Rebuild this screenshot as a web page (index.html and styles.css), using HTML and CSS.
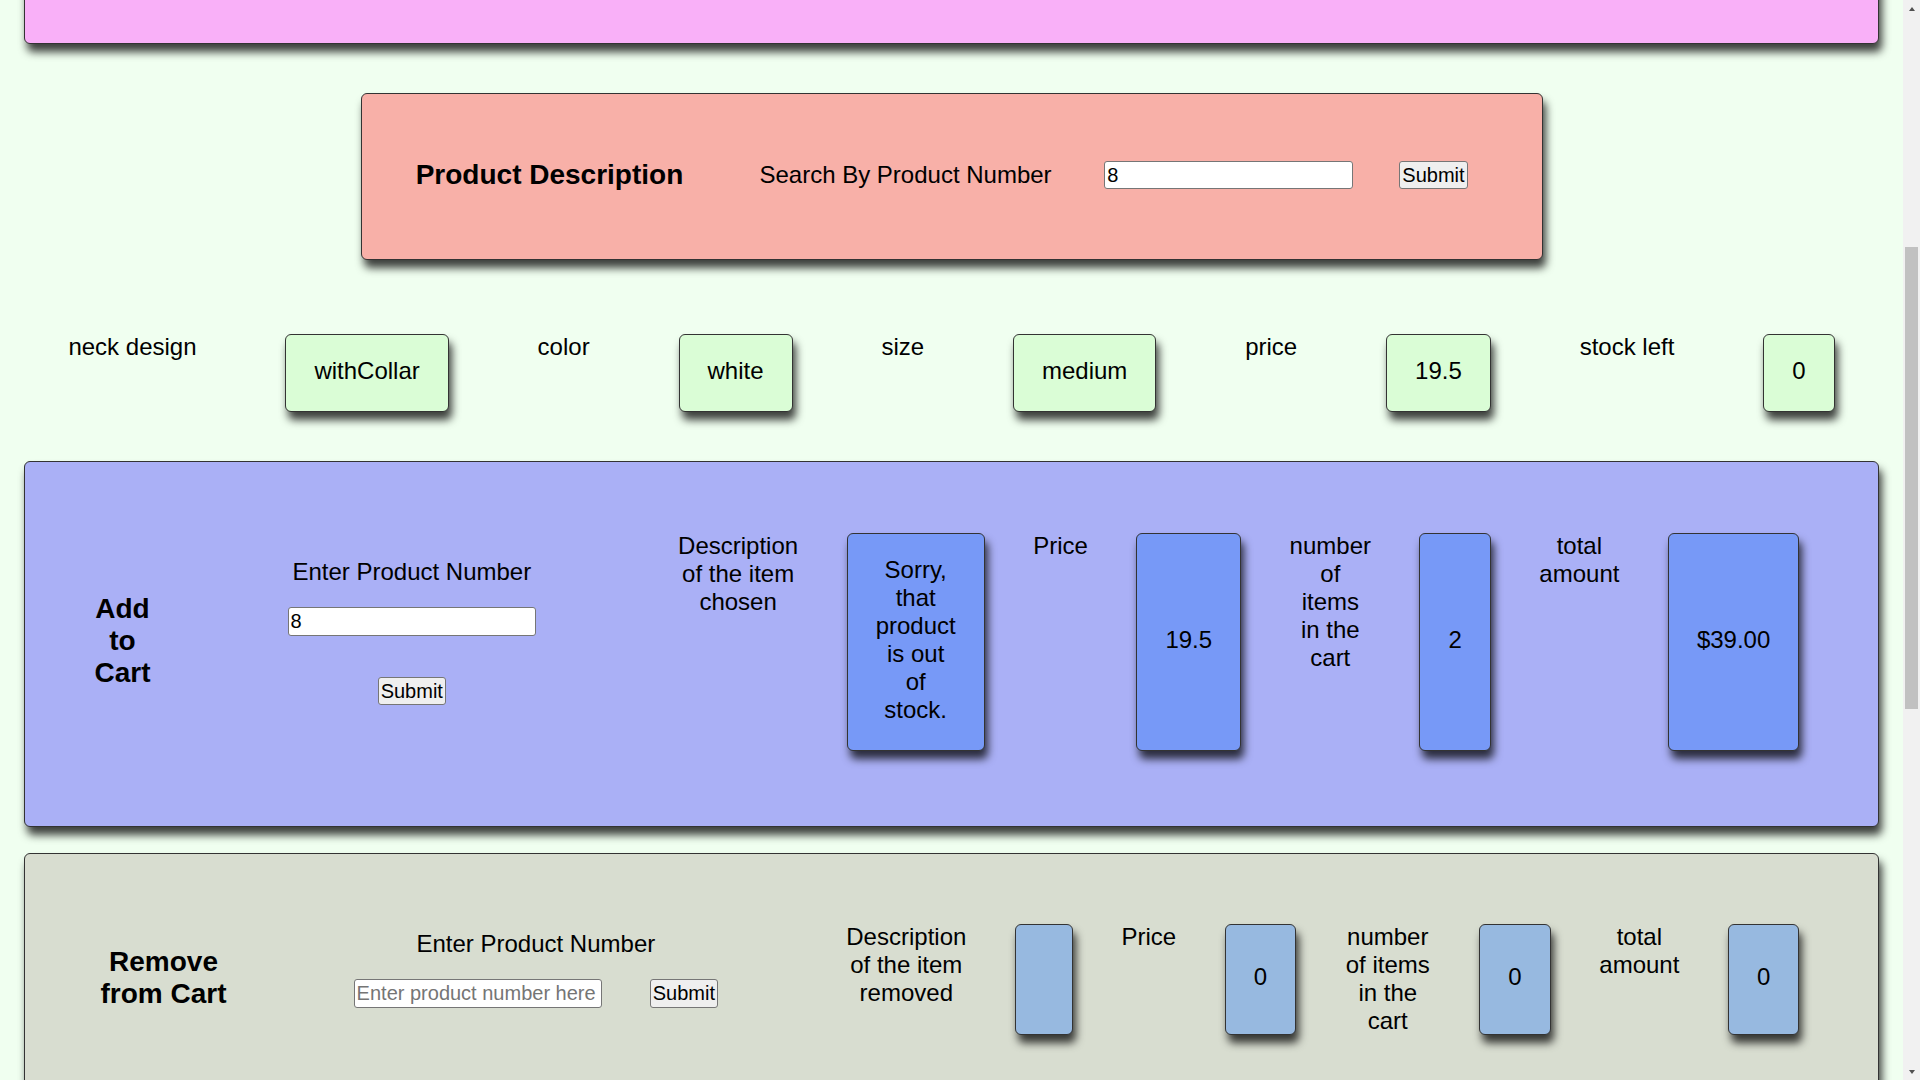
FILE: index.html
```html
<!DOCTYPE html>
<html lang="en">
<head>
<meta charset="utf-8">
<title>Shirt Store</title>
<link rel="stylesheet" href="styles.css">
</head>
<body>
<div class="page">
  <header class="banner"></header>

  <section class="search-panel">
    <h2 class="search-title">Product Description</h2>
    <label class="search-label" for="search-number">Search By Product Number</label>
    <input id="search-number" class="field" type="text" value="8">
    <button class="btn search-btn" type="button">Submit</button>
  </section>

  <section class="features">
    <span class="feat-label">neck design</span>
    <div class="feat-box">withCollar</div>
    <span class="feat-label">color</span>
    <div class="feat-box">white</div>
    <span class="feat-label">size</span>
    <div class="feat-box">medium</div>
    <span class="feat-label">price</span>
    <div class="feat-box">19.5</div>
    <span class="feat-label">stock left</span>
    <div class="feat-box">0</div>
  </section>

  <section class="panel add-panel">
    <h2 class="panel-title add-title"><span class="title-text">Add to Cart</span></h2>
    <div class="entry add-entry">
      <label class="entry-label" for="add-number">Enter Product Number</label>
      <input id="add-number" class="field" type="text" value="8">
      <button class="btn add-btn" type="button">Submit</button>
    </div>
    <div class="fields add-fields">
      <span class="f-label">Description of the item chosen</span>
      <div class="f-box add-box">Sorry, that product is out of stock.</div>
      <span class="f-label">Price</span>
      <div class="f-box add-box">19.5</div>
      <span class="f-label">number of items in the cart</span>
      <div class="f-box add-box">2</div>
      <span class="f-label">total amount</span>
      <div class="f-box add-box">$39.00</div>
    </div>
  </section>

  <section class="panel remove-panel">
    <h2 class="panel-title remove-title"><span class="title-text">Remove from Cart</span></h2>
    <div class="entry remove-entry">
      <label class="entry-label" for="remove-number">Enter Product Number</label>
      <div class="entry-row">
        <input id="remove-number" class="field" type="text" placeholder="Enter product number here">
        <button class="btn" type="button">Submit</button>
      </div>
    </div>
    <div class="fields remove-fields">
      <span class="f-label">Description of the item removed</span>
      <div class="f-box remove-box"></div>
      <span class="f-label">Price</span>
      <div class="f-box remove-box">0</div>
      <span class="f-label wide">number of items in the cart</span>
      <div class="f-box remove-box">0</div>
      <span class="f-label">total amount</span>
      <div class="f-box remove-box">0</div>
    </div>
  </section>
</div>

<div class="scrollbar" aria-hidden="true">
  <span class="sb-arrow sb-up"></span>
  <span class="sb-track"><span class="sb-thumb"></span></span>
  <span class="sb-arrow sb-down"></span>
</div>
<script src="script.js"></script>
</body>
</html>
```

FILE: styles.css
```css
* {
  box-sizing: border-box;
}

html {
  background: #f0fff0;
  scroll-behavior: auto;
  scrollbar-width: none;
}

body {
  margin: 0;
  background: #f0fff0;
  color: #000;
  font-family: "Liberation Sans", Arial, sans-serif;
  font-size: 24px;
  line-height: 28px;
}

.page {
  margin-right: 17px;
  padding: 24px 24px 793px;
}

/* window scrollbar (drawn, the real one is hidden) */
.scrollbar {
  position: fixed;
  top: 0;
  right: 0;
  display: flex;
  flex-direction: column;
  width: 17px;
  height: 100vh;
  background: #f1f1f1;
}

.sb-arrow {
  display: flex;
  align-items: center;
  justify-content: center;
  flex: 0 0 17px;
}

.sb-arrow::before {
  content: "";
  width: 0;
  height: 0;
  border-left: 3.5px solid transparent;
  border-right: 3.5px solid transparent;
}

.sb-up::before {
  border-bottom: 4px solid #505050;
}

.sb-down::before {
  border-top: 4px solid #505050;
}

.sb-track {
  display: block;
  flex: 1 1 auto;
  padding: 229.6px 2px 0;
}

.sb-thumb {
  display: block;
  height: 462.8px;
  background: #c1c1c1;
}

.banner {
  height: 556px;
  background: #f9b0f8;
  border: 1px solid #333;
  border-radius: 6px;
  box-shadow: 3px 8px 8px rgba(0, 0, 0, 0.75);
}

/* product search */
.search-panel {
  display: flex;
  align-items: center;
  width: 1182px;
  height: 167px;
  margin: 49.3px auto 0;
  padding: 0 0 3px 54.2px;
  background: #f8b0a8;
  border: 1px solid #333;
  border-radius: 6px;
  box-shadow: 3px 8px 8px rgba(0, 0, 0, 0.75);
}

.search-title {
  margin: 0;
  font-size: 28px;
  line-height: 32px;
  font-weight: bold;
}

.search-label {
  margin-left: 76.2px;
}

.search-panel .field {
  margin-left: 52.7px;
}

.search-btn {
  margin-left: 46.6px;
}

.field {
  width: 248.4px;
  height: 28.4px;
  padding: 1px 2px;
  border: 1px solid #767676;
  border-radius: 3px;
  background: #fff;
  color: #000;
  font-family: "Liberation Sans", Arial, sans-serif;
  font-size: 20px;
}

.field::placeholder {
  color: #757575;
}

.btn {
  width: 68.4px;
  height: 28.4px;
  padding: 0;
  border: 1px solid #767676;
  border-radius: 3px;
  background: #efefef;
  color: #000;
  font-family: "Liberation Sans", Arial, sans-serif;
  font-size: 20px;
}

/* feature row */
.features {
  display: flex;
  justify-content: space-around;
  align-items: flex-start;
  margin-top: 73.3px;
}

.feat-label {
  margin-top: -1px;
}

.feat-box {
  padding: 22.2px 28px 26.2px;
  background: #dafdd6;
  border: 1px solid #333;
  border-radius: 6px;
  box-shadow: 3px 8px 8px rgba(0, 0, 0, 0.75);
}

/* cart panels */
.panel {
  display: flex;
  align-items: stretch;
  margin-top: 49.3px;
  padding: 70.3px 0 75.3px;
  border: 1px solid #333;
  border-radius: 6px;
  box-shadow: 3px 8px 8px rgba(0, 0, 0, 0.75);
}

.add-panel {
  background: #aab0f6;
}

.remove-panel {
  margin-top: 25.3px;
  padding-top: 70px;
  background: #d8ddd0;
}

.panel-title {
  display: flex;
  align-items: center;
  justify-content: center;
  margin: 0;
  padding-bottom: 2px;
  font-size: 28px;
  line-height: 31.6px;
  font-weight: bold;
  text-align: center;
}

.add-title {
  flex: 0 0 195px;
}

.remove-title {
  flex: 0 0 277px;
}

.title-text {
  width: min-content;
}

.remove-title .title-text {
  width: 130px;
}

.entry {
  display: flex;
  flex-direction: column;
  align-items: center;
  justify-content: center;
  padding-bottom: 19px;
}

.add-entry {
  flex: 0 0 383.6px;
}

.remove-entry {
  flex: 0 0 467.7px;
}

.entry-label {
  margin-top: -1px;
  margin-bottom: 21.2px;
}

.add-btn {
  margin-top: 41px;
}

.entry-row {
  display: flex;
  gap: 47.7px;
}

.fields {
  display: flex;
  align-items: stretch;
}

.add-fields {
  margin-left: 74.5px;
  gap: 48.5px;
}

.remove-fields {
  margin-left: 76.6px;
  gap: 48.6px;
}

.f-label {
  width: min-content;
  margin-top: -1px;
  text-align: center;
}

.f-label.wide {
  width: 86px;
}

.f-box {
  display: flex;
  align-items: center;
  justify-content: center;
  width: min-content;
  padding: 22px 28px 26.4px;
  text-align: center;
  border: 1px solid #333;
  border-radius: 6px;
  box-shadow: 3px 8px 8px rgba(0, 0, 0, 0.75);
}

.add-box {
  background: #7799f7;
}

.remove-box {
  background: #97b9e0;
}
```

FILE: script.js
```js
window.scrollTo(0, 536);
window.addEventListener('load', function () {
  window.scrollTo(0, 536);
});
```
